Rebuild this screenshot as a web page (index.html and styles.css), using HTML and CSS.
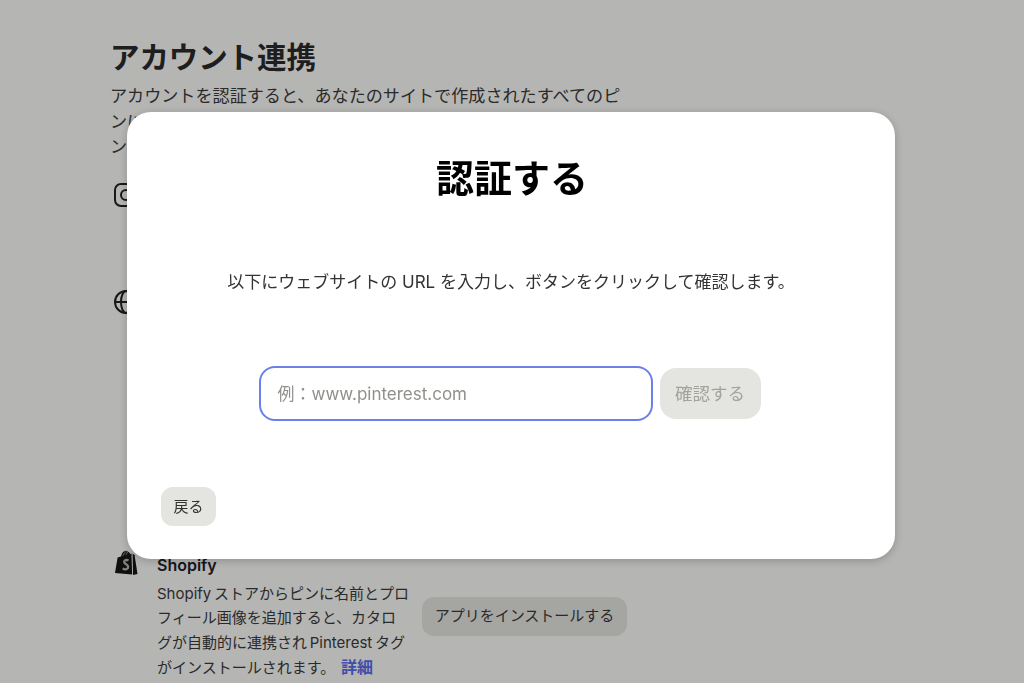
FILE: index.html
```html
<!DOCTYPE html>
<html lang="ja">
<head>
<meta charset="utf-8">
<title>アカウント連携</title>
<link rel="stylesheet" href="styles.css">
</head>
<body>
<main class="page">
  <h1 class="page-title">アカウント連携</h1>
  <p class="page-desc">アカウントを認証すると、あなたのサイトで作成されたすべてのピ<br>ンにあなたの名前とプロフィール画像が追加され、さらに、そのピ<br>ンの統計情報も確認できます。</p>
  <section class="account account-ig">
    <svg class="icon" viewBox="0 0 24 24" fill="none" stroke="#222" stroke-width="2"><rect x="1" y="1" width="22" height="22" rx="6"/><circle cx="12" cy="12" r="5"/></svg>
  </section>
  <section class="account account-web">
    <svg class="icon" viewBox="0 0 24 24" fill="none" stroke="#222" stroke-width="2"><circle cx="12" cy="12" r="11"/><ellipse cx="12" cy="12" rx="5" ry="11"/><path d="M1 12h22"/></svg>
  </section>
  <section class="account account-shop">
    <svg class="icon-shop" viewBox="0 0 24 27"><path fill="#161616" d="M1 23 3.600 7.500 7 6.400C7.700 3.200 9.500.8 12 .8c.8 0 1.400.3 1.800.9 1.300 0 2 1 2.400 2.300l1.300-.4.600 20.800L1 23Z"/><path fill="none" stroke="#b5b5b3" stroke-width=".8" d="M9 6C9.500 3.500 10.800 1.800 12.500 1.800M12 5.200C12.300 3.600 13 2.500 14 2.300"/><path fill="#161616" d="m18.600 3.500 2 1.700L23.500 24l-4.500 1Z"/><path fill="none" stroke="#b5b5b3" stroke-width="2.300" d="M14.500 10.500c-2-1-4.300-.3-4.300 1.500 0 2.200 4 2.300 4 4.800 0 2.500-3 3.300-5.500 1.800"/></svg>
    <div class="shop-body">
      <h2 class="shop-name">Shopify</h2>
      <div class="shop-row">
        <p class="shop-desc">Shopify ストアからピンに名前とプロフィール画像を追加すると、カタログが自動的に連携され Pinterest タグがインストールされます。 <a class="link" href="#">詳細</a></p>
        <button class="btn-install" type="button">アプリをインストールする</button>
      </div>
    </div>
  </section>
</main>
<div class="overlay">
  <div class="modal" role="dialog">
    <h2 class="modal-title">認証する</h2>
    <p class="modal-text">以下にウェブサイトの URL を入力し、ボタンをクリックして確認します。</p>
    <div class="form-row">
      <input class="url-input" type="text" placeholder="例：www.pinterest.com">
      <button class="btn-confirm" type="button">確認する</button>
    </div>
    <div class="modal-footer">
      <button class="btn-back" type="button">戻る</button>
    </div>
  </div>
</div>
</body>
</html>
```
FILE: styles.css
```css
* { box-sizing: border-box; }
html, body { margin: 0; height: 683px; overflow: hidden; }
body {
  background: #fffffc;
  color: #333;
  font-family: Inter, "Noto Sans CJK JP", sans-serif;
}
.page { width: 530px; margin-left: 110px; padding-top: 37px; }
.page-title { margin: 0; font-size: 29.500px; line-height: 40px; font-weight: 700; letter-spacing: -.1px; color: #2b2b2b; }
.page-desc { margin: 6px 0 0; font-size: 17.100px; line-height: 25.500px; color: #3c3c3c; white-space: nowrap; }
.account { display: flex; gap: 19px; padding-left: 4px; }
.account-ig { margin-top: 23px; height: 107px; }
.account-web { height: 260px; }
.icon { width: 24px; height: 24px; flex: none; }
.icon-shop { width: 24px; height: 27px; flex: none; }
.shop-body { flex: 1; }
.shop-name { margin: 5px 0 0; font-size: 16px; line-height: 20px; font-weight: 600; color: #222; }
.shop-row { display: flex; align-items: flex-start; gap: 13px; margin-top: 7px; }
.shop-desc { margin: 0; width: 254px; flex: none; font-size: 15px; line-height: 24.500px; color: #3c3c3c; word-spacing: -1.500px; }
.link { margin-left: 3px; color: #5b6ff0; font-size: 16px; font-weight: 700; text-decoration: none; }
.btn-install {
  flex: none; width: 205px; height: 39px; margin: 15px 0 0 -2px; padding: 0 0 3px;
  border: 0; border-radius: 12px; background: #e9e9e4; color: #3c3c3c;
  font: 15px Inter, "Noto Sans CJK JP", sans-serif;
}
.overlay {
  position: fixed; inset: 0;
  background: rgba(0, 0, 0, .29);
}
.modal {
  position: absolute; left: 127px; top: 112px;
  width: 768px; height: 447px;
  display: flex; flex-direction: column; align-items: center;
  padding: 41px 34px 33px;
  background: #fff; border-radius: 24px;
  box-shadow: 0 2px 10px rgba(0, 0, 0, .22);
}
.modal-title { margin: 0; padding-left: 2px; font-size: 38px; line-height: 50px; font-weight: 700; color: #000; }
.modal-text { margin: 67px 0 0; font-size: 17px; line-height: 24px; color: #333; }
.form-row { display: flex; align-items: center; gap: 7px; margin: 72px 3px 0 0; }
.url-input {
  width: 394px; height: 55px; padding: 0 17px;
  border: 2px solid #6b80e8; border-radius: 16px; outline: 0;
  font: 17px Inter, "Noto Sans CJK JP", sans-serif; color: #111;
}
.url-input::placeholder { color: #8f8f8b; opacity: 1; }
.btn-confirm {
  width: 101px; height: 51px; padding: 0 0 2px; border: 0; border-radius: 16px;
  background: #e4e4e0; color: #a3a39e;
  font: 17.500px Inter, "Noto Sans CJK JP", sans-serif;
}
.modal-footer { align-self: stretch; margin-top: auto; }
.btn-back {
  width: 55px; height: 39px; padding: 0 0 3px; border: 0; border-radius: 12px;
  background: #e4e4e0; color: #333;
  font: 15px Inter, "Noto Sans CJK JP", sans-serif;
}
```
